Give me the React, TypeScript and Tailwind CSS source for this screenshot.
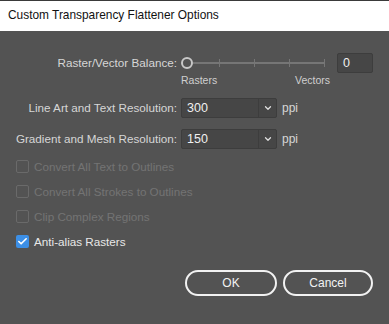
import { Check, ChevronDown } from 'lucide-react'

const font = { fontFamily: '"Liberation Sans", Arial, sans-serif' }

function ResolutionRow({ label, value }: { label: string; value: string }) {
  return (
    <div className="flex items-center h-[20px]">
      <div className="w-[181px] pr-[4px] text-right text-[11.7px] text-[#d6d6d6] whitespace-nowrap">{label}</div>
      <div className="flex h-[20px] w-[96px] rounded-[2px] border border-[#3d3d3d] bg-[#464646]">
        <div className="flex-1 pl-[5px] text-[12.5px] leading-[18px] text-[#f0f0f0]">{value}</div>
        <div className="w-[18px] border-l border-[#3d3d3d] flex items-center justify-center">
          <ChevronDown className="w-[10px] h-[10px] text-[#e0e0e0]" strokeWidth={3} />
        </div>
      </div>
      <span className="ml-[5px] text-[12px] text-[#d6d6d6]">ppi</span>
    </div>
  )
}

function CheckRow({ label, checked = false }: { label: string; checked?: boolean }) {
  return (
    <div className="flex items-center h-[13px] gap-[5px]">
      {checked ? (
        <div className="w-[13px] h-[13px] rounded-[2px] bg-[#3c8fe6] flex items-center justify-center">
          <Check className="w-[11px] h-[11px] text-white" strokeWidth={3.5} />
        </div>
      ) : (
        <div className="w-[13px] h-[13px] rounded-[2px] border border-[#6a6a6a]" />
      )}
      <span className={`text-[11.7px] ${checked ? 'text-[#e8e8e8]' : 'text-[#737373]'}`}>{label}</span>
    </div>
  )
}

export default function App() {
  return (
    <div className="w-[389px] h-[324px] bg-[#535353] flex flex-col" style={font}>
      <div className="h-[31px] bg-white border-t border-[#3a3a3a] flex items-center px-[8px] text-[11.9px] text-[#111]">
        Custom Transparency Flattener Options
      </div>

      <div className="pt-[22px] flex flex-col">
        <div className="flex items-start">
          <div className="w-[181px] pr-[4px] text-right text-[11.7px] text-[#d6d6d6] leading-[20px] whitespace-nowrap">
            Raster/Vector Balance:
          </div>
          <div className="flex flex-col w-[146px]">
            <div className="flex items-center h-[20px]">
              <div className="w-[12px] h-[12px] rounded-full border-2 border-[#c8c8c8]" />
              <div className="relative flex-1 h-[2px] bg-[#767676] mr-[2px]">
                <div className="absolute left-[26px] -top-[3px] w-px h-[8px] bg-[#767676]" />
                <div className="absolute left-[61px] -top-[3px] w-px h-[8px] bg-[#767676]" />
                <div className="absolute left-[96px] -top-[3px] w-px h-[8px] bg-[#767676]" />
                <div className="absolute right-0 -top-[3px] w-px h-[8px] bg-[#767676]" />
              </div>
            </div>
            <div className="flex justify-between text-[10.5px] text-[#cfcfcf] leading-[14px] -mr-[3px]">
              <span>Rasters</span>
              <span>Vectors</span>
            </div>
          </div>
          <div className="ml-[10px] w-[36px] h-[20px] rounded-[2px] border border-[#3d3d3d] bg-[#464646] pl-[5px] text-[12.5px] leading-[18px] text-[#f0f0f0]">
            0
          </div>
        </div>

        <div className="mt-[11px] flex flex-col gap-[11px]">
          <ResolutionRow label="Line Art and Text Resolution:" value="300" />
          <ResolutionRow label="Gradient and Mesh Resolution:" value="150" />
        </div>

        <div className="mt-[11px] pl-[16px] flex flex-col gap-[12px]">
          <CheckRow label="Convert All Text to Outlines" />
          <CheckRow label="Convert All Strokes to Outlines" />
          <CheckRow label="Clip Complex Regions" />
          <CheckRow label="Anti-alias Rasters" checked />
        </div>

        <div className="mt-[22px] flex justify-end gap-[6px] pr-[16px]">
          <button className="w-[92px] h-[26px] rounded-full border-2 border-[#f2f2f2] text-[12px] text-[#f2f2f2]">OK</button>
          <button className="w-[90px] h-[26px] rounded-full border-2 border-[#f2f2f2] text-[12px] text-[#f2f2f2]">Cancel</button>
        </div>
      </div>
    </div>
  )
}
